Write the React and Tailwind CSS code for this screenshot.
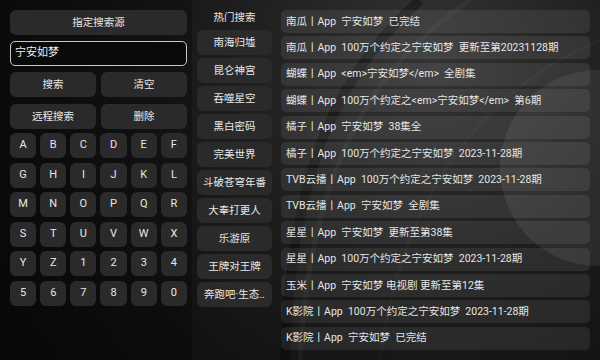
import React from 'react';

const keys = [
  'A', 'B', 'C', 'D', 'E', 'F',
  'G', 'H', 'I', 'J', 'K', 'L',
  'M', 'N', 'O', 'P', 'Q', 'R',
  'S', 'T', 'U', 'V', 'W', 'X',
  'Y', 'Z', '1', '2', '3', '4',
  '5', '6', '7', '8', '9', '0'
];

const hot = ['南海归墟', '昆仑神宫', '吞噬星空', '黑白密码', '完美世界', '斗破苍穹年番', '大奉打更人', '乐游原', '王牌对王牌', '奔跑吧·生态..'];

const results = [
  '南瓜丨App  宁安如梦  已完结',
  '南瓜丨App  100万个约定之宁安如梦  更新至第20231128期',
  '蝴蝶丨App  <em>宁安如梦</em>  全剧集',
  '蝴蝶丨App  100万个约定之<em>宁安如梦</em>  第6期',
  '橘子丨App  宁安如梦  38集全',
  '橘子丨App  100万个约定之宁安如梦  2023-11-28期',
  'TVB云播丨App  100万个约定之宁安如梦  2023-11-28期',
  'TVB云播丨App  宁安如梦  全剧集',
  '星星丨App  宁安如梦  更新至第38集',
  '星星丨App  100万个约定之宁安如梦  2023-11-28期',
  '玉米丨App  宁安如梦 电视剧 更新至第12集',
  'K影院丨App  100万个约定之宁安如梦  2023-11-28期',
  'K影院丨App  宁安如梦  已完结'
];

const Btn = ({ children, className = '' }) => (
  <div className={`flex items-center justify-center rounded-[6px] bg-[#2a2a2a] text-[#e8e8e8] ${className}`}>
    {children}
  </div>
);

export default function App() {
  return (
    <div className="relative w-[600px] h-[360px] overflow-hidden bg-[#111] bg-[radial-gradient(circle_at_72%_18%,#343434_0%,#1d1d1d_40%,#101010_75%,#0b0b0b_100%)] font-[Roboto,'Noto_Sans_CJK_SC',sans-serif]">
      {/* background decoration */}
      <svg className="absolute inset-0" width="600" height="360" viewBox="0 0 600 360">
        <circle cx="598" cy="168" r="98" fill="rgba(255,255,255,0.07)" />
        <path d="M470 0 C 380 60, 310 160, 300 360" stroke="rgba(255,255,255,0.035)" strokeWidth="5" fill="none" />
        <path d="M420 0 C 340 70, 290 170, 285 360" stroke="rgba(0,0,0,0.3)" strokeWidth="10" fill="none" />
        <path d="M600 40 C 480 90, 400 200, 380 360" stroke="rgba(255,255,255,0.025)" strokeWidth="3" fill="none" />
        <rect x="0" y="0" width="192" height="360" fill="rgba(0,0,0,0.25)" />
      </svg>

      <div className="relative flex h-full pl-[10px] pt-[10px]">
        {/* left */}
        <div className="w-[177px] flex flex-col text-[10.5px]">
          <Btn className="h-[25px]">指定搜索源</Btn>
          <div className="mt-[6px] h-[25px] rounded-[5px] border-[1.5px] border-[#c8c8c8] bg-[#0a0a0a] flex items-center px-[4px] text-[#f0f0f0] text-[11px]">
            宁安如梦
          </div>
          <div className="mt-[6px] grid grid-cols-2 gap-[5px]">
            <Btn className="h-[25px]">搜索</Btn>
            <Btn className="h-[25px]">清空</Btn>
          </div>
          <div className="mt-[7px] grid grid-cols-2 gap-[5px]">
            <Btn className="h-[25px]">远程搜索</Btn>
            <Btn className="h-[25px]">删除</Btn>
          </div>
          <div className="mt-[4px] grid grid-cols-6 gap-x-[4px] gap-y-[4.5px]">
            {keys.map((k) => (
              <Btn key={k} className="h-[25px] text-[11px]">{k}</Btn>
            ))}
          </div>
        </div>

        {/* middle */}
        <div className="ml-[10px] w-[75px] flex flex-col">
          <div className="h-[16px] flex items-center justify-center text-[10.5px] text-[#e8e8e8]">热门搜索</div>
          <div className="mt-[4px] flex flex-col gap-[3px]">
            {hot.map((h) => (
              <Btn key={h} className="h-[25px] text-[10.5px] whitespace-nowrap overflow-hidden">{h}</Btn>
            ))}
          </div>
        </div>

        {/* right */}
        <div className="ml-[9px] w-[309px] flex flex-col gap-[3.4px]">
          {results.map((r, i) => (
            <div key={i} className="h-[23px] rounded-[5px] bg-white/[0.08] flex items-center pl-[5px] text-[10.5px] text-[#e6e6e6] whitespace-pre">
              {r}
            </div>
          ))}
        </div>
      </div>
    </div>
  );
}
